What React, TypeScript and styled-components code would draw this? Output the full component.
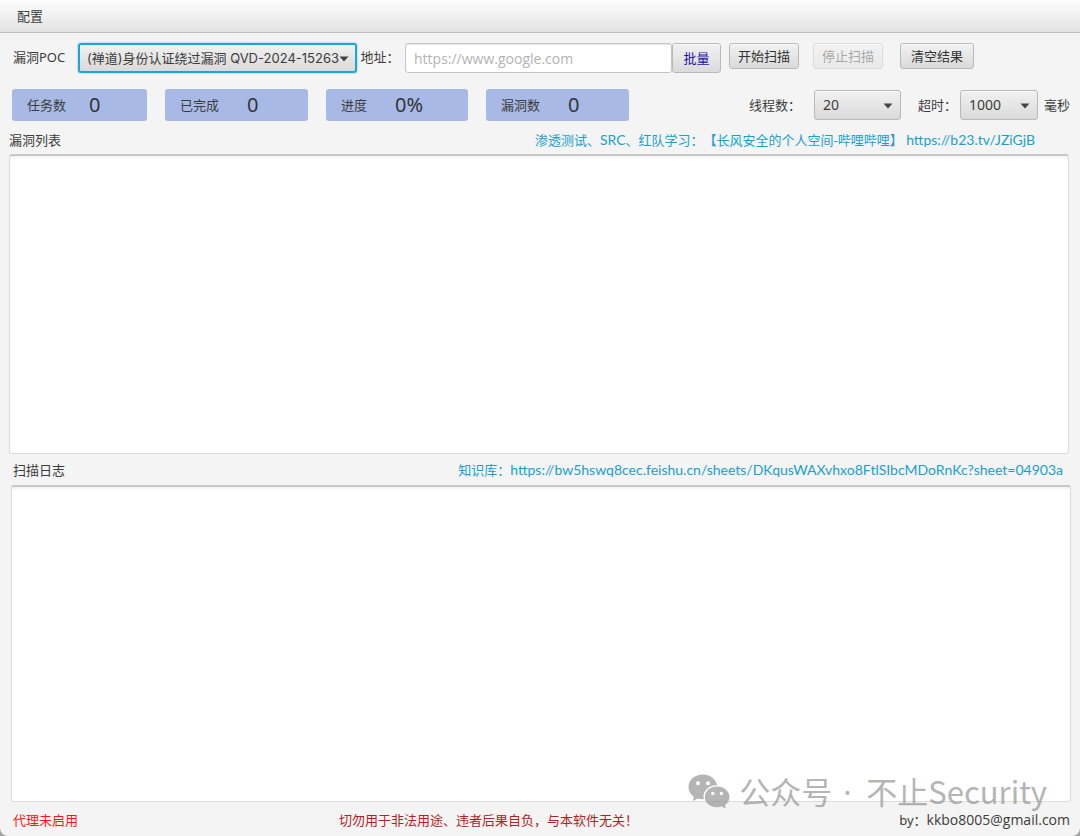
import React from "react";
import styled, { createGlobalStyle } from "styled-components";

const GlobalStyle = createGlobalStyle`
  * { box-sizing: border-box; }
  html, body { margin: 0; background: #a3a3a3; }
  body, button, input, select, textarea {
    font-family: "Noto Sans", "Noto Sans CJK SC", sans-serif;
    font-size: 13px;
    line-height: 20px;
    color: #3c3c3c;
    text-spacing-trim: space-all;
  }
`;

const Window = styled.div`
  position: relative;
  display: flex;
  flex-direction: column;
  min-height: 100vh;
  background: #f4f4f4;
  border-radius: 0 0 8px 8px;
  overflow: hidden;
`;

const MenuBar = styled.nav`
  display: flex;
  align-items: center;
  height: 33px;
  padding: 0 10px;
  background: linear-gradient(#fdfdfd, #e3e3e3);
  border-bottom: 1px solid #bcbcbc;
`;

const MenuButton = styled.button`
  border: 0;
  padding: 0 7px;
  background: transparent;
`;

const Toolbar = styled.div`
  display: flex;
  align-items: flex-start;
  padding: 10px 106px 0 13px;
`;

const Label = styled.label<{ $width?: number }>`
  flex: none;
  width: ${(p) => (p.$width ? `${p.$width}px` : "auto")};
  line-height: 28px;
  white-space: nowrap;
`;

const SelectBox = styled.div<{ $width: number }>`
  position: relative;
  flex: none;
  width: ${(p) => p.$width}px;
`;

const Select = styled.select<{ $focused?: boolean }>`
  display: block;
  appearance: none;
  width: 100%;
  height: 30px;
  padding: 0 8px;
  border: ${(p) => (p.$focused ? "2px solid #1ca7d3" : "1px solid #b9b9b9")};
  padding-left: ${(p) => (p.$focused ? 7 : 8)}px;
  border-radius: 3px;
  outline: 0;
  background: linear-gradient(#f1f1f1, #dadada);
  box-shadow: ${(p) => (p.$focused ? "0 0 1px 1px #bfe4f0" : "inset 0 1px 0 #fafafa")};
  font-family: ${(p) => (p.$focused ? "Inter" : '"Noto Sans"')}, "Noto Sans CJK SC", sans-serif;
  font-size: ${(p) => (p.$focused ? 13 : 14)}px;
`;

const Arrow = styled.svg`
  position: absolute;
  top: 13px;
  right: 8px;
  pointer-events: none;
`;

const AddressInput = styled.input`
  flex: 1;
  min-width: 0;
  height: 30px;
  padding: 0 8px;
  border: 1px solid #c5c5c5;
  border-radius: 3px;
  outline: 0;
  background: #fff;
  box-shadow: inset 0 1px 1px #e8e8e8;
  font-family: "Open Sans", "Noto Sans CJK SC", sans-serif;
  font-size: 14px;
  &::placeholder { color: #b3b3b3; opacity: 1; }
`;

const Button = styled.button<{ $width: number; $tall?: boolean; $gap?: number }>`
  flex: none;
  width: ${(p) => p.$width}px;
  height: ${(p) => (p.$tall ? 30 : 26)}px;
  margin-left: ${(p) => p.$gap ?? 0}px;
  padding: 0;
  border: 1px solid #b9b9b9;
  border-radius: 3px;
  background: linear-gradient(#f2f2f2, #dadada);
  box-shadow: inset 0 1px 0 #fafafa;
  color: ${(p) => (p.$tall ? "#1d12a8" : "#333")};
  &:disabled { opacity: 0.4; }
`;

const StatusRow = styled.div`
  display: flex;
  align-items: center;
  justify-content: space-between;
  padding: 16px 10px 0 12px;
`;

const Group = styled.div<{ $gap?: number }>`
  display: flex;
  align-items: center;
  gap: ${(p) => p.$gap ?? 0}px;
`;

const Card = styled.div<{ $width: number; $gap?: number }>`
  display: flex;
  align-items: center;
  gap: ${(p) => p.$gap ?? 28}px;
  width: ${(p) => p.$width}px;
  height: 32px;
  padding-left: 15px;
  border-radius: 3px;
  background: #a9b9e6;
`;

const CardValue = styled.strong`
  font-size: 20px;
  font-weight: 400;
  line-height: 32px;
  color: #333;
`;

const Heading = styled.div<{ $inset: number; $right: number; $height: number; $top?: number }>`
  display: flex;
  align-items: center;
  justify-content: space-between;
  height: ${(p) => p.$height}px;
  padding: ${(p) => p.$top ?? 0}px ${(p) => p.$right}px 0 ${(p) => p.$inset}px;
`;

const Link = styled.a`
  color: #1a9fcd;
  text-decoration: none;
  white-space: pre;
`;

const Latin = styled.span`
  font-family: Lato, sans-serif;
  font-size: 14px;
`;

const Mail = styled.span`
  font-family: "Open Sans", sans-serif;
  font-size: 14px;
`;

const Area = styled.textarea<{ $grow: number; $left: number; $right: number }>`
  display: block;
  flex: ${(p) => p.$grow} 1 0;
  min-height: 120px;
  margin: 0 ${(p) => p.$right}px 0 ${(p) => p.$left}px;
  padding: 6px 8px;
  border: 1px solid #dcdcdc;
  border-top: 2px solid #c8c8c8;
  border-radius: 3px;
  outline: 0;
  resize: none;
  background: #fff;
  box-shadow: inset 0 2px 2px #f3f3f3;
`;

const Footer = styled.footer`
  display: flex;
  justify-content: space-between;
  align-items: center;
  height: 34px;
  padding: 2px 10px 0 13px;
`;

const Notice = styled.span<{ $color: string }>`
  color: ${(p) => p.$color};
`;

const Watermark = styled.div`
  position: absolute;
  right: 33px;
  bottom: 26px;
  display: flex;
  align-items: center;
  gap: 9px;
  opacity: 0.7;
  color: #969696;
  font-family: "Noto Sans CJK SC", sans-serif;
  font-size: 31px;
  line-height: 36px;
  white-space: pre;
  pointer-events: none;
`;

const Dot = styled.span`
  display: inline-block;
  width: 34px;
  padding-right: 4px;
  font-family: "Noto Sans", sans-serif;
  text-align: center;
`;

function DropDown(props: { id: string; value: string; width: number; focused?: boolean }) {
  return (
    <SelectBox $width={props.width}>
      <Select id={props.id} $focused={props.focused} defaultValue={props.value}>
        <option>{props.value}</option>
      </Select>
      <Arrow width="10" height="6" viewBox="0 0 10 6" aria-hidden="true">
        <path d="M0.5 0.5H9.5L5 5.5Z" fill="#444" />
      </Arrow>
    </SelectBox>
  );
}

const stats = [
  { name: "任务数", value: "0", width: 135, gap: 23 },
  { name: "已完成", value: "0", width: 143 },
  { name: "进度", value: "0%", width: 142 },
  { name: "漏洞数", value: "0", width: 143 },
];

export default function App() {
  return (
    <>
      <GlobalStyle />
      <Window>
        <MenuBar>
          <MenuButton type="button">配置</MenuButton>
        </MenuBar>

        <Toolbar>
          <Label htmlFor="poc" $width={65}>漏洞POC</Label>
          <DropDown id="poc" value="(禅道)身份认证绕过漏洞 QVD-2024-15263" width={279} focused />
          <Label htmlFor="address" $width={48}>&nbsp;地址：</Label>
          <AddressInput id="address" placeholder="https://www.google.com" />
          <Button type="button" $width={49} $tall>批量</Button>
          <Button type="button" $width={70} $gap={8}>开始扫描</Button>
          <Button type="button" $width={70} $gap={14} disabled>停止扫描</Button>
          <Button type="button" $width={74} $gap={17}>清空结果</Button>
        </Toolbar>

        <StatusRow>
          <Group $gap={18}>
            {stats.map((s) => (
              <Card key={s.name} $width={s.width} $gap={s.gap}>
                <span>{s.name}</span>
                <CardValue>{s.value}</CardValue>
              </Card>
            ))}
          </Group>
          <Group $gap={17}>
            <Group>
              <Label htmlFor="threads" $width={65}>线程数：</Label>
              <DropDown id="threads" value="20" width={87} />
            </Group>
            <Group>
              <Label htmlFor="timeout" $width={42}>超时：</Label>
              <Group $gap={6}>
                <DropDown id="timeout" value="1000" width={78} />
                <span>毫秒</span>
              </Group>
            </Group>
          </Group>
        </StatusRow>

        <Heading $inset={9} $right={45} $height={33} $top={4}>
          <label htmlFor="results">漏洞列表</label>
          <Link href="https://b23.tv/JZiGjB">
            渗透测试、<Latin>SRC</Latin>、红队学习：【长风安全的个人空间-哔哩哔哩】 <Latin>https://b23.tv/JZiGjB</Latin>
          </Link>
        </Heading>
        <Area id="results" readOnly $grow={300} $left={9} $right={11} />

        <Heading $inset={13} $right={17} $height={31}>
          <label htmlFor="log">扫描日志</label>
          <Link href="https://bw5hswq8cec.feishu.cn/sheets/DKqusWAXvhxo8FtlSIbcMDoRnKc?sheet=04903a">
            知识库：<Latin>https://bw5hswq8cec.feishu.cn/sheets/DKqusWAXvhxo8FtlSIbcMDoRnKc?sheet=04903a</Latin>
          </Link>
        </Heading>
        <Area id="log" readOnly $grow={317} $left={11} $right={9} />

        <Footer>
          <Notice $color="#ff1414">代理未启用</Notice>
          <Notice $color="#b22222">切勿用于非法用途、违者后果自负，与本软件无关！</Notice>
          <span>by：<Mail>kkbo8005@gmail.com</Mail></span>
        </Footer>

        <Watermark>
          <svg width="42" height="36" viewBox="0 0 42 36" aria-hidden="true">
            <path
              fill="#969696"
              fillRule="evenodd"
              d="M15 0.5C6.800 0.500 0.500 5.900 0.500 13C0.500 17 2.500 20.400 5.800 22.700L4.800 27L9.800 24.500Q12.300 25.300 15.800 25.200C13.900 17.500 20.500 11 29.300 11.300C27.800 5.200 22 0.500 15 0.500ZM10 7.200A2 2 0 1 1 10 11.200A2 2 0 1 1 10 7.200ZM20 7.200A2 2 0 1 1 20 11.200A2 2 0 1 1 20 7.200Z"
            />
            <path
              fill="#969696"
              fillRule="evenodd"
              d="M29 12.500C22.200 12.500 16.800 17.200 16.800 23C16.800 28.800 22.200 33.300 29 33.300Q31.500 33.300 33.800 32.500L38 34.800L37 31.200C39.800 29.200 41.500 26.400 41.500 23C41.500 17.200 36 12.500 29 12.500ZM24.800 17.800A1.700 1.700 0 1 1 24.800 21.200A1.700 1.700 0 1 1 24.800 17.800ZM33.400 17.800A1.700 1.700 0 1 1 33.400 21.200A1.700 1.700 0 1 1 33.400 17.800Z"
            />
          </svg>
          <span>公众号<Dot>·</Dot>不止Security</span>
        </Watermark>
      </Window>
    </>
  );
}
